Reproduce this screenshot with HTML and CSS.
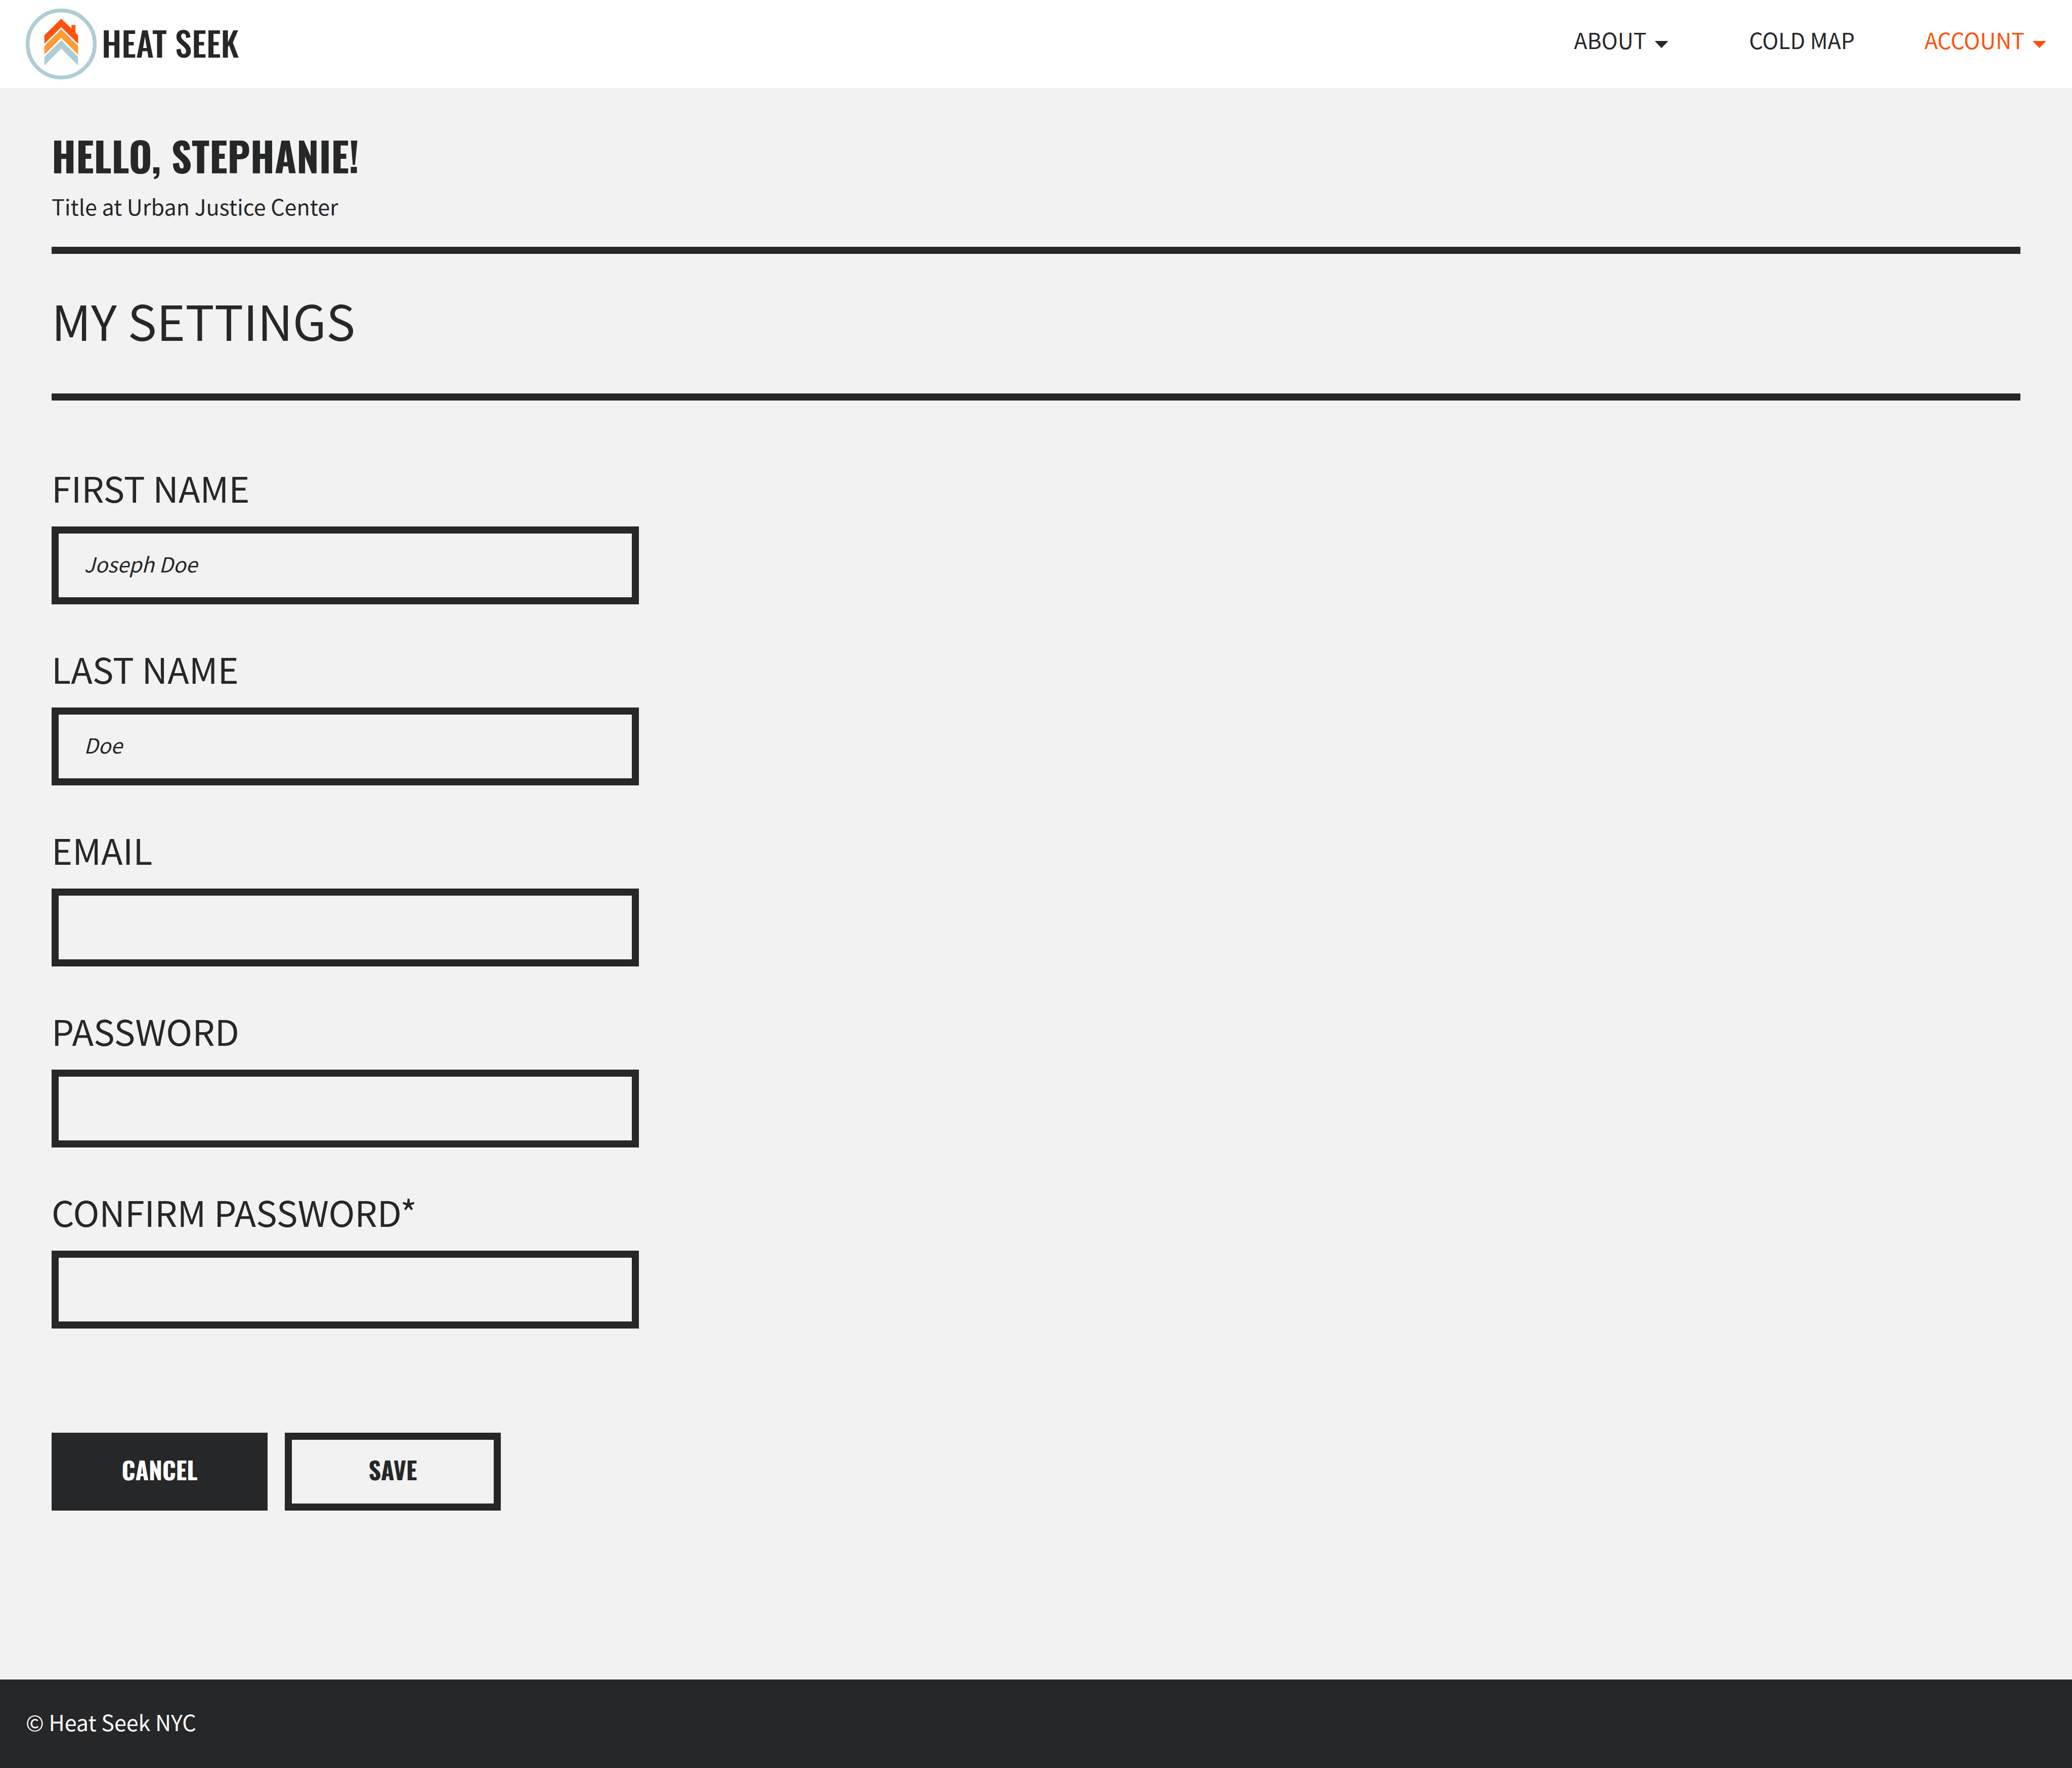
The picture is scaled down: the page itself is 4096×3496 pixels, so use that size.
FILE: index.html
```html
<!DOCTYPE html>
<html lang="en">
<head>
<meta charset="utf-8">
<title>Heat Seek – My Settings</title>
<link rel="stylesheet" href="styles.css">
</head>
<body>
<header class="site-header">
  <a class="brand" href="#">
    <svg class="brand-mark" viewBox="0 0 171 171" aria-hidden="true">
      <circle cx="85.5" cy="85.5" r="81" fill="none" stroke="#aecdd5" stroke-width="9.2"/>
      <path fill="#ff520d" d="M85.5 24.3 110.2 48V39.6H119.8V58L126.3 64.3V85L85.5 45 44.8 85V64.3Z"/>
      <path fill="#ff9b33" d="M85.5 50 126.3 90.3V111.3L85.5 70.6 44.8 111.3V90.3Z"/>
      <path fill="#aecdd5" d="M85.5 76.3 126.3 116.6V137.3L85.5 96.6 44.8 137.3V116.6Z"/>
    </svg>
    <span class="brand-name">HEAT SEEK</span>
  </a>
  <nav class="main-nav">
    <a class="nav-link nav-menu" href="#">ABOUT<svg class="caret" viewBox="0 0 27 14" aria-hidden="true"><path d="M0 0H27L13.5 14Z"/></svg></a>
    <a class="nav-link" href="#">COLD MAP</a>
    <a class="nav-link nav-menu nav-current" href="#">ACCOUNT<svg class="caret" viewBox="0 0 27 14" aria-hidden="true"><path d="M0 0H27L13.5 14Z"/></svg></a>
  </nav>
</header>
<main class="page">
  <div class="greeting">
    <h1 class="greeting-name">HELLO, STEPHANIE!</h1>
    <p class="greeting-role">Title at Urban Justice Center</p>
  </div>
  <h2 class="section-title">MY SETTINGS</h2>
  <form class="settings">
    <div class="field">
      <label class="field-label" for="first-name">FIRST NAME</label>
      <input class="field-input" id="first-name" type="text" placeholder="Joseph Doe">
    </div>
    <div class="field">
      <label class="field-label" for="last-name">LAST NAME</label>
      <input class="field-input" id="last-name" type="text" placeholder="Doe">
    </div>
    <div class="field">
      <label class="field-label" for="email">EMAIL</label>
      <input class="field-input" id="email" type="email">
    </div>
    <div class="field">
      <label class="field-label" for="password">PASSWORD</label>
      <input class="field-input" id="password" type="password">
    </div>
    <div class="field">
      <label class="field-label" for="confirm">CONFIRM PASSWORD*</label>
      <input class="field-input" id="confirm" type="password">
    </div>
    <div class="actions">
      <button class="button button-solid" type="button">CANCEL</button>
      <button class="button" type="submit">SAVE</button>
    </div>
  </form>
</main>
<footer class="site-footer">© Heat Seek NYC</footer>
</body>
</html>
```
FILE: styles.css
```css
:root {
  --ink: #262729;
  --paper: #f2f2f2;
  --accent: #ff520d;
  --line: 14px;
  --body-font: "Noto Sans CJK JP", "Noto Sans", sans-serif;
  --display-font: "Oswald", "Liberation Sans Narrow", sans-serif;
}

* {
  box-sizing: border-box;
}

body {
  display: flex;
  flex-direction: column;
  min-height: 100vh;
  margin: 0;
  background: var(--paper);
  color: var(--ink);
  font-family: var(--body-font);
  font-size: 43px;
  line-height: 60px;
}

.site-header {
  display: flex;
  align-items: center;
  justify-content: space-between;
  padding: 17px 29px 17px 51px;
  background: #fff;
}

.brand {
  display: flex;
  align-items: center;
  gap: 10px;
  color: inherit;
  text-decoration: none;
}

.brand-mark {
  width: 140px;
  height: 140px;
}

.brand-name {
  padding-bottom: 6px;
  font-family: var(--display-font);
  font-size: 67px;
  font-weight: 500;
  line-height: 84px;
}

.main-nav {
  display: flex;
  gap: 138px;
  padding-bottom: 18px;
}

.nav-link {
  display: flex;
  align-items: center;
  gap: 16px;
  color: inherit;
  text-decoration: none;
}

.nav-menu {
  padding-right: 22px;
}

.nav-current {
  color: var(--accent);
}

.caret {
  width: 27px;
  height: 14px;
  margin-top: 20px;
  fill: currentColor;
}

.page {
  flex: 1;
  padding: 92px 102px 0;
}

.greeting {
  padding-bottom: 51px;
  border-bottom: var(--line) solid var(--ink);
}

.greeting-name {
  margin: 0 0 27px;
  font-family: var(--display-font);
  font-size: 79px;
  font-weight: 700;
  line-height: 84px;
}

.greeting-role {
  margin: 0;
}

.section-title {
  margin: 0;
  padding: 76px 0 90px;
  border-bottom: var(--line) solid var(--ink);
  font-size: 96px;
  font-weight: 400;
  line-height: 110px;
}

.settings {
  display: flex;
  flex-direction: column;
  gap: 82px;
  padding: 127px 0 140px;
}

.field {
  display: flex;
  flex-direction: column;
  gap: 32px;
  max-width: 1161px;
}

.field-label {
  font-size: 70px;
  line-height: 90px;
}

.field-input {
  width: 100%;
  height: 154px;
  padding: 0 50px 8px;
  border: var(--line) solid var(--ink);
  border-radius: 0;
  background: transparent;
  color: inherit;
  font: inherit;
  font-size: 41px;
  font-style: italic;
}

.field-input::placeholder {
  color: inherit;
  opacity: 1;
}

.actions {
  display: flex;
  gap: 34px;
  padding-top: 124px;
}

.button {
  width: 427px;
  height: 154px;
  padding: 0 0 10px;
  border: var(--line) solid var(--ink);
  background: transparent;
  color: inherit;
  font-family: var(--display-font);
  font-size: 48px;
  font-weight: 700;
}

.button-solid {
  background: var(--ink);
  color: #fff;
}

.site-footer {
  padding: 53px 51px 62px;
  background: var(--ink);
  color: #fff;
}
```
